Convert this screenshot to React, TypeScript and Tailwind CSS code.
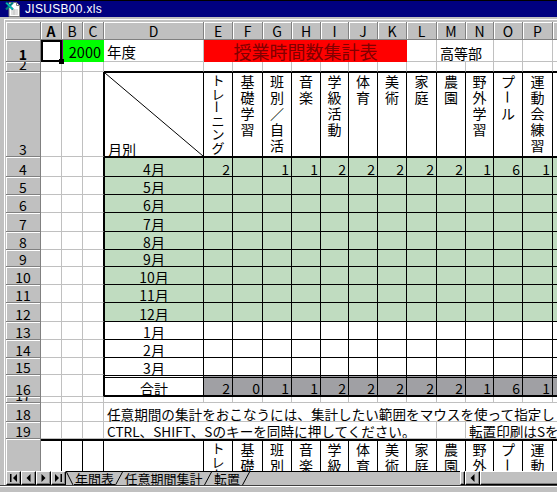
import React from 'react';

const W = ['w-[21px]','w-[21px]','w-[21px]','w-[100px]','w-[29px]','w-[30px]','w-[29px]','w-[29px]','w-[28px]','w-[29px]','w-[29px]','w-[30px]','w-[29px]','w-[28px]','w-[29px]','w-[30px]','w-[40px]'];
const LETTERS = ['A','B','C','D','E','F','G','H','I','J','K','L','M','N','O','P','Q'];
const SUBJECTS = ['トレーニング','基礎学習','班別／自活','音楽','学級活動','体育','美術','家庭','農園','野外学習','プール','運動会練習',''];
const GRID = 'border-r border-b border-[#c0c0c0]';
const GRID_B = 'border-b border-[#c0c0c0]';
const CBLK = 'border-r border-r-black border-b border-b-[#c0c0c0]';

const MONTHS = [
  { n: '4', m: '4月', h: 'h-[20px]', g: true, v: ['2','','1','1','2','2','2','2','2','1','6','1',''] },
  { n: '5', m: '5月', h: 'h-[18px]', g: true },
  { n: '6', m: '6月', h: 'h-[18px]', g: true },
  { n: '7', m: '7月', h: 'h-[19px]', g: true },
  { n: '8', m: '8月', h: 'h-[18px]', g: true },
  { n: '9', m: '9月', h: 'h-[17px]', g: true },
  { n: '10', m: '10月', h: 'h-[18px]', g: true },
  { n: '11', m: '11月', h: 'h-[18px]', g: true },
  { n: '12', m: '12月', h: 'h-[19px]', g: true },
  { n: '13', m: '1月', h: 'h-[18px]', g: false },
  { n: '14', m: '2月', h: 'h-[18px]', g: false },
  { n: '15', m: '3月', h: 'h-[17px]', g: false },
];
const TOTALS = ['2','0','1','1','2','2','2','2','2','1','6','1',''];

function Cell({ w, cls = '', children }: { w: string; cls?: string; children?: React.ReactNode }) {
  return <div className={`shrink-0 ${w} ${cls}`}>{children}</div>;
}

function RH({ n, bold }: { n?: string; bold?: boolean }) {
  return (
    <div className={`shrink-0 w-[35px] bg-[#c0c0c0] border-r border-b border-[#808080] shadow-[inset_1px_1px_0_#ffffff] flex items-end justify-center overflow-hidden text-[14px] leading-[14px] ${bold ? 'font-bold' : ''}`}>
      <span>{n}</span>
    </div>
  );
}

function VText({ text }: { text: string }) {
  const tight = text.length > 5;
  return (
    <div className={`flex flex-col items-center ${tight ? 'text-[13px] leading-[13.5px]' : 'text-[14px] leading-[16px]'}`}>
      {Array.from(text).map((ch, i) =>
        ch === 'ー' ? (
          <span key={i} className="rotate-90">ー</span>
        ) : (
          <span key={i}>{ch}</span>
        )
      )}
    </div>
  );
}

function Raised({ cls = '', children }: { cls?: string; children?: React.ReactNode }) {
  return (
    <div className={`shrink-0 bg-[#c0c0c0] border border-t-white border-l-white border-r-black border-b-black shadow-[inset_-1px_-1px_0_#808080] flex items-center justify-center ${cls}`}>
      {children}
    </div>
  );
}

function Tri({ dir, bar }: { dir: 'l' | 'r'; bar?: boolean }) {
  return (
    <svg width="9" height="8" viewBox="0 0 9 8">
      {dir === 'l' ? (
        <>
          {bar && <rect x="1" y="0" width="1.5" height="8" fill="black" />}
          <polygon points={bar ? '8,0 8,8 4,4' : '6.5,0 6.5,8 2.5,4'} fill="black" />
        </>
      ) : (
        <>
          <polygon points={bar ? '1,0 1,8 5,4' : '2.5,0 2.5,8 6.5,4'} fill="black" />
          {bar && <rect x="6.5" y="0" width="1.5" height="8" fill="black" />}
        </>
      )}
    </svg>
  );
}

function Slash({ back }: { back?: boolean }) {
  return (
    <svg className="shrink-0" width="8" height="13" viewBox="0 0 8 13">
      {back ? (
        <line x1="0.5" y1="0" x2="7" y2="13" stroke="black" strokeWidth="1" />
      ) : (
        <line x1="0.5" y1="13" x2="7.5" y2="0" stroke="black" strokeWidth="1" />
      )}
    </svg>
  );
}

function ExcelIcon() {
  return (
    <svg width="16" height="16" viewBox="0 0 16 16" className="shrink-0">
      <polygon points="4,1.5 11.5,1.5 14.5,4.5 14.5,15.5 4,15.5" fill="white" stroke="#808080" />
      <polyline points="11.5,1.5 11.5,4.5 14.5,4.5" fill="none" stroke="#808080" />
      <line x1="6" y1="9" x2="13" y2="9" stroke="#c0c0c0" />
      <line x1="6" y1="11" x2="13" y2="11" stroke="#c0c0c0" />
      <line x1="6" y1="13" x2="13" y2="13" stroke="#c0c0c0" />
      <line x1="9" y1="8" x2="9" y2="14" stroke="#c0c0c0" />
      <path d="M1,1.5 L8,8.5 M8,1.5 L1,8.5" stroke="#008080" strokeWidth="2.2" />
      <path d="M1.5,2 L7.5,8" stroke="#00ffff" strokeWidth="0.8" />
    </svg>
  );
}

export default function App() {
  return (
    <div className="w-[557px] h-[492px] overflow-hidden bg-[#c0c0c0] flex flex-col text-black [font-family:'Noto_Sans_CJK_JP','Noto_Sans',sans-serif]">
      {/* title bar */}
      <div className="h-[17px] shrink-0 border-t border-black bg-[#000080] flex items-center pl-[5px] gap-[4px]">
        <ExcelIcon />
        <span className="text-white text-[12px] leading-[12px] tracking-[0.3px] [font-family:'Liberation_Sans',Arial,sans-serif]">JISUSB00.xls</span>
      </div>

      {/* frame + content */}
      <div className="flex-1 flex flex-col pt-[2px] pl-[4px] min-h-0">
        <div className="flex-1 flex flex-col border-t border-l border-white pt-[2px] pl-[1px] min-h-0">
          {/* sheet */}
          <div className="h-[449px] shrink-0 overflow-hidden bg-white flex flex-col">
            {/* column headers */}
            <div className="flex shrink-0 h-[18px]">
              <div className="shrink-0 w-[35px] bg-[#c0c0c0] border-r border-b border-[#808080] shadow-[inset_1px_1px_0_#ffffff]" />
              {W.map((w, i) => (
                <Cell key={i} w={w} cls={`bg-[#c0c0c0] border-r border-b border-[#808080] shadow-[inset_1px_1px_0_#ffffff] flex items-center justify-center text-[14px] leading-[14px] ${i === 0 ? 'font-bold' : ''}`}>
                  {i < 16 ? LETTERS[i] : ''}
                </Cell>
              ))}
            </div>

            {/* row 1 */}
            <div className="flex shrink-0 h-[22px]">
              <RH n="1" bold />
              <Cell w={W[0]} cls="relative z-10 border-2 border-black shadow-[1px_0_0_#800080]">
                <div className="absolute right-[-4px] bottom-[-4px] w-[5px] h-[5px] bg-black" />
              </Cell>
              <Cell w="w-[42px]" cls="bg-[#00ff00] flex items-end justify-end pr-[3px] pb-[3px] text-[14.5px] leading-[14px]">2000</Cell>
              <Cell w={W[3]} cls={`${GRID} flex items-end pl-[3px] pb-[2px] text-[14.5px] leading-[14px]`}>年度</Cell>
              <Cell w="w-[203px]" cls="bg-[#ff0000] flex items-end justify-center pb-[2px] text-[18px] leading-[18px] text-[#800000]">授業時間数集計表</Cell>
              <Cell w={W[11]} cls={GRID} />
              <Cell w={W[12]} cls={`${GRID_B} flex items-end pl-[3px] pb-[1px] text-[14px] leading-[14px] whitespace-nowrap`}>高等部</Cell>
              <Cell w={W[13]} cls={GRID} />
              <Cell w={W[14]} cls={GRID} />
              <Cell w={W[15]} cls={GRID} />
              <Cell w={W[16]} cls={GRID} />
            </div>

            {/* row 2 */}
            <div className="flex shrink-0 h-[10px]">
              <RH n="2" />
              <Cell w={W[0]} cls={GRID} />
              <Cell w={W[1]} cls={GRID} />
              <Cell w={W[2]} cls={GRID} />
              {W.slice(3).map((w, i) => (
                <Cell key={i} w={w} cls="border-r border-r-[#c0c0c0] border-b border-b-black" />
              ))}
            </div>

            {/* row 3 */}
            <div className="flex shrink-0 h-[85px]">
              <RH n="3" />
              <Cell w={W[0]} cls={GRID} />
              <Cell w={W[1]} cls={GRID} />
              <Cell w={W[2]} cls={CBLK} />
              <Cell w={W[3]} cls="relative border-t border-l border-r border-b border-black flex items-end pl-[3px] text-[14px] leading-[14px]">
                <svg className="absolute inset-0 w-full h-full" viewBox="0 0 100 100" preserveAspectRatio="none">
                  <line x1="0" y1="0" x2="100" y2="100" stroke="black" strokeWidth="1" vectorEffect="non-scaling-stroke" />
                </svg>
                <span className="relative">月別</span>
              </Cell>
              {W.slice(4).map((w, i) => (
                <Cell key={i} w={w} cls="border-t border-r border-b border-black flex justify-center overflow-hidden">
                  <VText text={SUBJECTS[i]} />
                </Cell>
              ))}
            </div>

            {/* rows 4-15 */}
            {MONTHS.map((r, ri) => {
              const bg = r.g ? 'bg-[#c0dcc0]' : 'bg-white';
              const t = ri === 0 ? 'border-t' : '';
              const b = ri === MONTHS.length - 1 ? '' : 'border-b';
              return (
                <div key={ri} className={`flex shrink-0 ${r.h}`}>
                  <RH n={r.n} />
                  <Cell w={W[0]} cls={GRID} />
                  <Cell w={W[1]} cls={GRID} />
                  <Cell w={W[2]} cls={CBLK} />
                  <Cell w={W[3]} cls={`border-l border-r border-black ${t} ${b} ${bg} flex items-end justify-center text-[14px] leading-[14px]`}>
                    {r.m}
                  </Cell>
                  {W.slice(4).map((w, i) => (
                    <Cell key={i} w={w} cls={`border-r border-black ${t} ${b} ${bg} flex items-end justify-end pr-[2px] text-[14px] leading-[14px]`}>
                      {r.v ? r.v[i] : ''}
                    </Cell>
                  ))}
                </div>
              );
            })}

            {/* row 16 */}
            <div className="flex shrink-0 h-[22px]">
              <RH n="16" />
              <Cell w={W[0]} cls={GRID} />
              <Cell w={W[1]} cls={GRID} />
              <Cell w={W[2]} cls={CBLK} />
              <Cell w={W[3]} cls="border-l border-r border-black border-t-[3px] [border-top-style:double] border-b-2 bg-white flex items-end justify-center text-[14px] leading-[14px]">
                合計
              </Cell>
              {W.slice(4).map((w, i) => (
                <Cell key={i} w={w} cls="border-r border-black border-t-[3px] [border-top-style:double] border-b-2 bg-[#a0a0a4] flex items-end justify-end pr-[2px] text-[14px] leading-[14px]">
                  {TOTALS[i]}
                </Cell>
              ))}
            </div>

            {/* row 17 */}
            <div className="flex shrink-0 h-[6px]">
              <RH n="17" />
              {W.map((w, i) => (
                <Cell key={i} w={w} cls={GRID} />
              ))}
            </div>

            {/* row 18 */}
            <div className="flex shrink-0 h-[19px]">
              <RH n="18" />
              <Cell w={W[0]} cls={GRID} />
              <Cell w={W[1]} cls={GRID} />
              <Cell w={W[2]} cls={GRID} />
              <Cell w={W[3]} cls={`${GRID_B} flex items-end pl-[3px] text-[13.6px] leading-[14px] whitespace-nowrap`}>
                任意期間の集計をおこなうには、集計したい範囲をマウスを使って指定し
              </Cell>
              {W.slice(4).map((w, i) => (
                <Cell key={i} w={w} cls={GRID_B} />
              ))}
            </div>

            {/* row 19 */}
            <div className="flex shrink-0 h-[17px]">
              <RH n="19" />
              <Cell w={W[0]} cls={GRID} />
              <Cell w={W[1]} cls={GRID} />
              <Cell w={W[2]} cls={GRID} />
              <Cell w={W[3]} cls={`${GRID_B} flex items-end pl-[3px] text-[13.6px] leading-[14px] whitespace-nowrap`}>
                CTRL、SHIFT、Sのキーを同時に押してください。
              </Cell>
              {W.slice(4, 11).map((w, i) => (
                <Cell key={i} w={w} cls={GRID_B} />
              ))}
              <Cell w={W[11]} cls={GRID} />
              <Cell w={W[12]} cls={GRID} />
              <Cell w={W[13]} cls={`${GRID_B} flex items-end pl-[3px] text-[13.6px] leading-[14px] whitespace-nowrap`}>
                転置印刷はSを
              </Cell>
              <Cell w={W[14]} cls={GRID_B} />
              <Cell w={W[15]} cls={GRID_B} />
              <Cell w={W[16]} cls={GRID_B} />
            </div>

            {/* row 20 (cut off by the sheet tabs) */}
            <div className="flex shrink-0 h-[32px]">
              <div className="shrink-0 w-[35px] bg-[#c0c0c0] border-r border-[#808080] shadow-[inset_1px_1px_0_#ffffff]" />
              {W.map((w, i) => (
                <Cell key={i} w={w} cls="border-t-2 border-r border-black flex justify-center overflow-hidden">
                  {i >= 4 ? <VText text={SUBJECTS[i - 4]} /> : null}
                </Cell>
              ))}
            </div>
          </div>

          {/* sheet tabs + scrollbar */}
          <div className="h-[14px] shrink-0 flex">
            <div className="flex shrink-0 w-[60px]">
              <Raised cls="w-[15px] h-[14px]"><Tri dir="l" bar /></Raised>
              <Raised cls="w-[15px] h-[14px]"><Tri dir="l" /></Raised>
              <Raised cls="w-[15px] h-[14px]"><Tri dir="r" /></Raised>
              <Raised cls="w-[15px] h-[14px]"><Tri dir="r" bar /></Raised>
            </div>
            <div className="flex shrink-0 w-[394px] border-t border-black">
              <Slash back />
              <span className="shrink-0 w-[41px] flex justify-center pt-[1px] text-[13px] leading-[12px] border-b border-black">年間表</span>
              <Slash />
              <span className="shrink-0 w-[81px] flex justify-center pt-[1px] text-[13px] leading-[12px]">任意期間集計</span>
              <Slash />
              <span className="shrink-0 w-[30px] flex justify-center pt-[1px] text-[13px] leading-[12px]">転置</span>
              <Slash />
            </div>
            <Raised cls="w-[5px] h-[14px]" />
            <Raised cls="w-[15px] h-[14px]"><Tri dir="l" /></Raised>
            <Raised cls="w-[80px] h-[14px]" />
          </div>
        </div>
      </div>

      {/* bottom frame */}
      <div className="h-[7px] shrink-0 border-t border-[#404040] shadow-[inset_0_1px_0_#ffffff]" />
    </div>
  );
}
